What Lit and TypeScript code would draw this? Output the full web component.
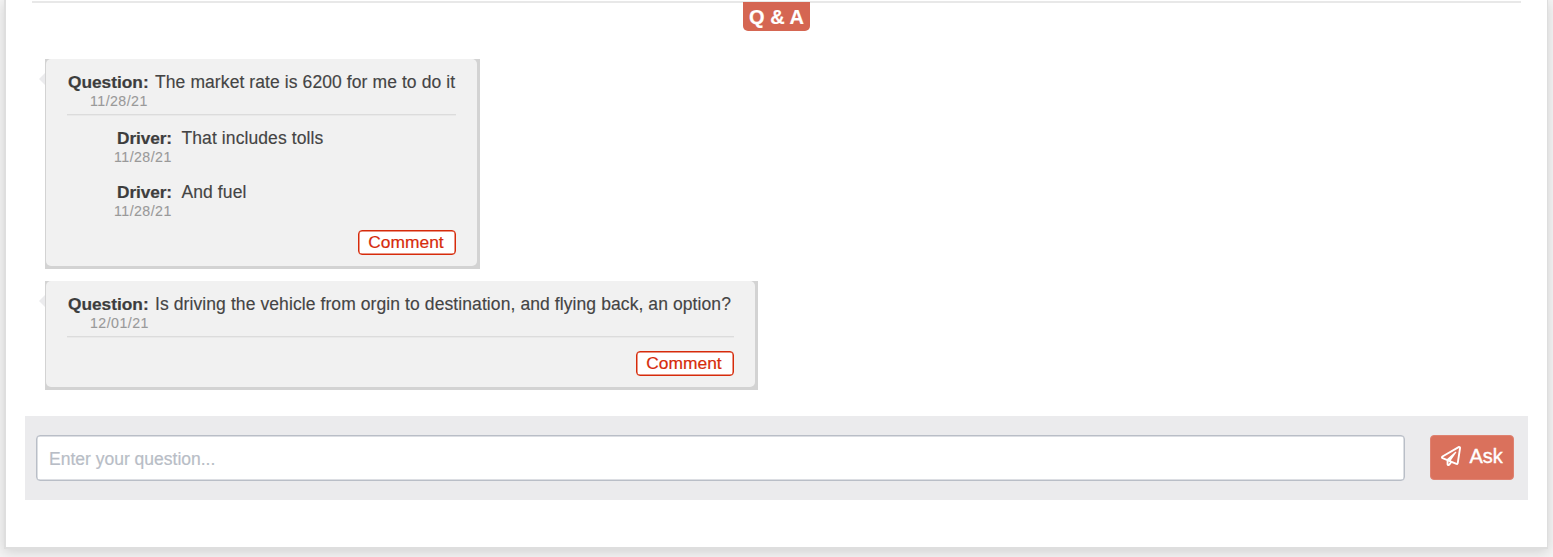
import { LitElement, html, css } from "lit";
import { customElement, property } from "lit/decorators.js";

interface Reply { text: string; date: string; }

@customElement("question-card")
class QuestionCard extends LitElement {
  @property() text = "";
  @property() date = "";
  @property({ attribute: false }) replies: Reply[] = [];

  static styles = css`
    :host { display: block; position: relative; background: #d3d3d3; padding: 0 3px 3px 1px; box-sizing: border-box; color: #444; font-size: 17.3px; white-space: nowrap; }
    :host::before { content: ""; position: absolute; left: -6px; top: 14px; border: solid transparent; border-width: 6.5px 6px 6.5px 0; border-right-color: #ebebed; }
    .body { background: #f1f1f1; border-radius: 5px; height: 100%; box-sizing: border-box; padding: 13px 21px 0; display: flex; flex-direction: column; }
    .head { height: 42px; border-bottom: 1px solid #dcdcdc; box-shadow: 0 1px #e9e9e9; padding-left: 1px; margin-bottom: 1px; }
    .line { display: flex; line-height: 20px; height: 20px; }
    .label { font-weight: bold; color: #3d3d3d; -webkit-text-stroke: 0.2px #3d3d3d; }
    .msg { font-size: 17.5px; letter-spacing: 0.09px; -webkit-text-stroke: 0.15px #444; }
    .head .label { width: 87px; }
    .date { font-size: 14.2px; line-height: 18px; color: #999; letter-spacing: 0.45px; padding-left: 22px; -webkit-text-stroke: 0.1px #999; }
    .reply { padding-left: 50px; height: 54px; }
    .reply .label { width: 64.5px; letter-spacing: -0.1px; }
    .reply .date { padding-left: 0; margin-left: -3px; }
    .replies { padding-top: 12px; }
    .btn { align-self: flex-end; width: 98px; height: 25px; box-sizing: border-box; background: #fff; border: 1px solid #d62b0b; box-shadow: inset 0 0 0 0.5px #d62b0b; border-radius: 4px; color: #d62b0b; font: 17.4px/22px "Liberation Sans", sans-serif; padding: 0 2px 1px 0; margin-top: 13px; -webkit-text-stroke: 0.2px #d62b0b; }
    .replies + .btn { margin-top: -6px; }
  `;

  render() {
    return html`<div class="body">
      <div class="head">
        <div class="line"><span class="label">Question:</span><span class="msg">${this.text}</span></div>
        <div class="date">${this.date}</div>
      </div>
      ${this.replies.length ? html`<div class="replies">${this.replies.map((r) => html`
        <div class="reply">
          <div class="line"><span class="label">Driver:</span><span class="msg">${r.text}</span></div>
          <div class="date">${r.date}</div>
        </div>`)}</div>` : ""}
      <button class="btn">Comment</button>
    </div>`;
  }
}

@customElement("app-root")
class AppRoot extends LitElement {
  static styles = css`
    :host { display: block; height: 557px; overflow: hidden; background: #f4f4f4; font-family: "Liberation Sans", sans-serif; box-sizing: border-box; padding: 0 5px 0 4px; }
    .panel { height: 549px; box-sizing: border-box; border: solid #dedede; border-width: 0 1px 2px 2px; background: #fff; box-shadow: 0 3px 12px rgba(0, 0, 0, 0.14); padding: 1px 19px 0; display: flex; flex-direction: column; }
    .title { margin: 0 7px; height: 58px; border-top: 2px solid #e8e8e8; box-sizing: border-box; display: flex; justify-content: center; align-items: flex-start; }
    .badge { background: #d56652; color: #fff; font-weight: bold; font-size: 20px; width: 67px; height: 29px; line-height: 31px; text-align: center; border-radius: 0 0 5px 5px; margin-top: -1px; -webkit-text-stroke: 0.2px #fff; }
    .card { margin-left: 20px; }
    .first { width: 435px; height: 210px; }
    .second { width: 713px; height: 109px; margin-top: 12px; }
    .ask { margin-top: 26px; height: 84px; background: #ebebed; display: flex; align-items: flex-start; padding: 19px 14px 0 11px; box-sizing: border-box; width: 1503px; }
    input { flex: 1; height: 46px; box-sizing: border-box; border: 1px solid #b9bec7; box-shadow: inset 0 0 0 0.5px #b9bec7; border-radius: 4px; padding: 2px 12px 0; font: 17.5px "Liberation Sans", sans-serif; background: #fff; margin-right: 25px; }
    input::placeholder { color: #b8bdc6; opacity: 1; -webkit-text-stroke: 0.2px #b8bdc6; }
    .send { width: 84px; height: 45px; border: 1px solid #df8170; border-radius: 4px; background: #da715c; color: #fff; display: flex; align-items: center; padding: 0 0 2px 10px; box-sizing: border-box; font: 20px "Liberation Sans", sans-serif; gap: 8.5px; -webkit-text-stroke: 0.4px #fff; }
    svg { flex: none; margin-bottom: 2px; }
  `;

  render() {
    return html`<div class="panel">
      <div class="title"><div class="badge">Q &amp; A</div></div>
      <question-card class="card first" text="The market rate is 6200 for me to do it" date="11/28/21"
        .replies=${[{ text: "That includes tolls", date: "11/28/21" }, { text: "And fuel", date: "11/28/21" }]}></question-card>
      <question-card class="card second" text="Is driving the vehicle from orgin to destination, and flying back, an option?" date="12/01/21"></question-card>
      <div class="ask">
        <input placeholder="Enter your question..." />
        <button class="send">
          <svg width="20" height="20" viewBox="0 0 512 512" fill="#fff"><path d="M440 6.5L24 246.4c-34.4 19.9-31.1 70.8 5.7 85.9L144 379.6V464c0 46.4 59.2 65.5 86.6 28.6l43.8-59.1 111.9 46.2c5.9 2.4 12.1 3.6 18.3 3.6 8.2 0 16.3-2.1 23.6-6.2 12.8-7.2 21.6-20 23.9-34.5l59.4-387.2c6.1-40.1-36.9-68.8-71.5-48.9zM192 464v-64.6l36.6 15.1L192 464zm212.6-28.7l-153.8-63.5L391 169.5c10.7-15.5-9.5-33.5-23.7-21.2L155.8 332.6 48 288 464 48l-59.4 387.3z"/></svg>
          <span>Ask</span>
        </button>
      </div>
    </div>`;
  }
}
